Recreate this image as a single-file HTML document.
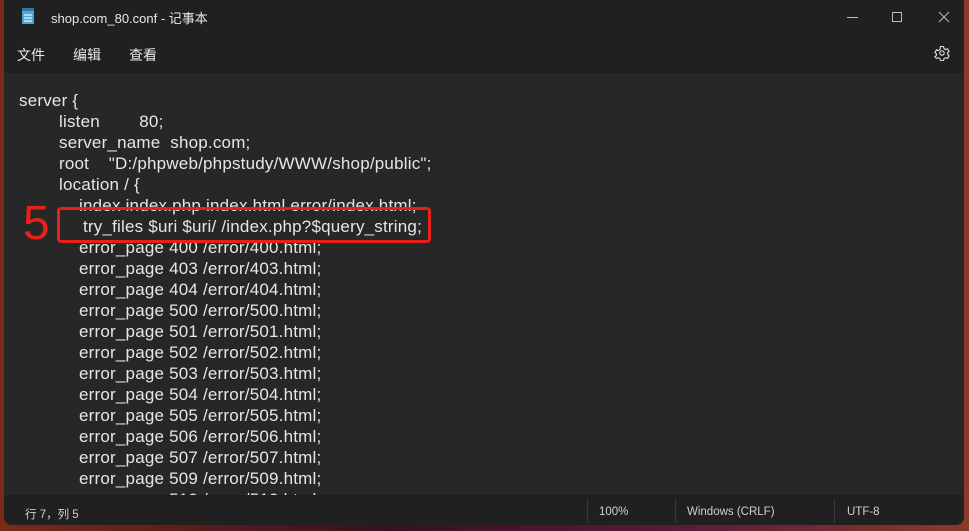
<!DOCTYPE html>
<html><head><meta charset="utf-8"><style>
body{margin:0;width:969px;height:531px;overflow:hidden;background:linear-gradient(90deg,#7a2a1a,#3a1020 40%,#5a1a3a 70%,#8a3a2a);font-family:"Liberation Sans","Noto Sans CJK SC",sans-serif;position:relative}
.win{position:absolute;left:4px;top:0;width:960px;height:525px;background:#202020;border-radius:0 0 8px 8px;overflow:hidden}
.title{position:absolute;left:47px;top:8px;color:#e8e8e8;font-size:13px}
.menu{position:absolute;top:45px;color:#e8e8e8;font-size:14px}
.editor{position:absolute;left:0;top:73px;width:960px;height:422px;background:#272727;overflow:hidden}
.code{position:absolute;left:15px;top:17px;color:#e6e6e6;font-size:17px;line-height:21px;white-space:pre;letter-spacing:0.2px}
.code div{height:21px}
.a{padding-left:40px}.b{padding-left:60px}.c{padding-left:64px}
.status{position:absolute;left:0;top:495px;width:960px;height:30px;background:#202020;color:#d0d0d0;font-size:11.5px}
.status span{position:absolute;top:11px}
.sep{position:absolute;top:4px;width:1px;height:24px;background:#383838}
</style></head><body>
<div class="win">
<svg style="position:absolute;left:17px;top:8px" width="14" height="17"><rect x="1" y="2" width="12" height="14" fill="#4aa8d8" rx="1"/><rect x="1" y="0" width="12" height="3" fill="#2a78a8"/><path d="M3 7h8M3 10h8M3 13h8" stroke="#e8f4fa" stroke-width="1.2"/></svg>
<div class="title">shop.com_80.conf - 记事本</div>
<svg style="position:absolute;left:842px;top:10px" width="110" height="14" stroke="#bbb" fill="none" stroke-width="1"><path d="M1 7.5h11"/><rect x="46.5" y="2.5" width="9" height="9"/><path d="M93 2l10 10M103 2l-10 10"/></svg>
<div class="menu" style="left:13px">文件</div><div class="menu" style="left:69px">编辑</div><div class="menu" style="left:125px">查看</div>
<svg style="position:absolute;left:930px;top:45px" width="16" height="16" viewBox="0 0 16 16" fill="none" stroke="#ddd" stroke-width="1.1"><path d="M6.5 1.5h3l.5 2 1.6 1 2-.7 1.5 2.6-1.5 1.4v1.6l1.5 1.4-1.5 2.6-2-.7-1.6 1-.5 2h-3l-.5-2-1.6-1-2 .7L.9 11.8l1.5-1.4V8.8L.9 7.4 2.4 4.8l2 .7 1.6-1z"/><circle cx="8" cy="8" r="2.2"/></svg>
<div class="editor">
<div class="code"><div>server {</div><div class="a">listen        80;</div><div class="a">server_name  shop.com;</div><div class="a">root    "D:/phpweb/phpstudy/WWW/shop/public";</div><div class="a">location / {</div><div class="b">index index.php index.html error/index.html;</div><div class="c">try_files $uri $uri/ /index.php?$query_string;</div><div class="b">error_page 400 /error/400.html;</div><div class="b">error_page 403 /error/403.html;</div><div class="b">error_page 404 /error/404.html;</div><div class="b">error_page 500 /error/500.html;</div><div class="b">error_page 501 /error/501.html;</div><div class="b">error_page 502 /error/502.html;</div><div class="b">error_page 503 /error/503.html;</div><div class="b">error_page 504 /error/504.html;</div><div class="b">error_page 505 /error/505.html;</div><div class="b">error_page 506 /error/506.html;</div><div class="b">error_page 507 /error/507.html;</div><div class="b">error_page 509 /error/509.html;</div><div class="b">error_page 510 /error/510.html;</div></div>
<div style="position:absolute;left:53px;top:134px;width:368px;height:30px;border:3px solid #e8201a;border-radius:4px"></div>
<div style="position:absolute;left:19px;top:126px;color:#e8201a;font-size:48px;line-height:50px">5</div>
</div>
<div class="status"><span style="left:21px">行 7，列 5</span><div class="sep" style="left:583px"></div><span style="left:595px">100%</span><div class="sep" style="left:671px"></div><span style="left:683px">Windows (CRLF)</span><div class="sep" style="left:830px"></div><span style="left:843px">UTF-8</span></div>
</div>
</body></html>
